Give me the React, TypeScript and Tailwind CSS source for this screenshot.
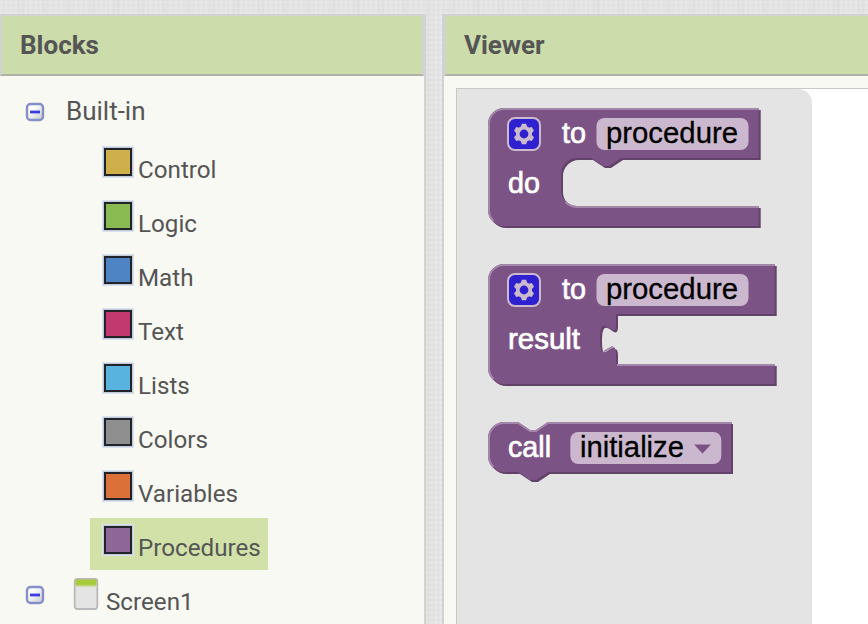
import type { ReactNode } from 'react';

const categories = [
  { name: 'Control', color: 'bg-[#cfae4c]' },
  { name: 'Logic', color: 'bg-[#8aba52]' },
  { name: 'Math', color: 'bg-[#4f84c4]' },
  { name: 'Text', color: 'bg-[#c2396f]' },
  { name: 'Lists', color: 'bg-[#58b4df]' },
  { name: 'Colors', color: 'bg-[#8f8f8f]' },
  { name: 'Variables', color: 'bg-[#db7139]' },
  { name: 'Procedures', color: 'bg-[#8f6698]', selected: true },
];

function Collapse() {
  return (
    <svg className="block h-5 w-5 shrink-0" viewBox="0 0 20 20">
      <defs>
        <linearGradient id="toggle" x1="0" y1="0" x2="1" y2="1">
          <stop offset="0.3" stopColor="#ffffff" />
          <stop offset="1" stopColor="#c8c8ce" />
        </linearGradient>
      </defs>
      <rect x="2" y="2" width="16" height="16" rx="3.5" fill="url(#toggle)" stroke="#8590c8" strokeWidth="2.4" />
      <path d="M5 10H15" stroke="#3c3ce0" strokeWidth="2.8" />
    </svg>
  );
}

function ScreenIcon() {
  return (
    <svg className="block h-8 w-[26px] shrink-0" viewBox="0 0 26 32">
      <defs>
        <linearGradient id="bar" x1="0" y1="0" x2="0" y2="1">
          <stop offset="0.6" stopColor="#a8cb3a" />
          <stop offset="1" stopColor="#e4e4e4" />
        </linearGradient>
      </defs>
      <rect x="1.7" y="1" width="22.6" height="30" rx="2.5" fill="#e4e4e4" stroke="#b9b9b9" strokeWidth="1.8" />
      <rect x="2.4" y="1.5" width="21.2" height="8" fill="url(#bar)" />
    </svg>
  );
}

function Panel({ title, className, headerClass, children }: { title: string; className: string; headerClass: string; children: ReactNode }) {
  return (
    <section className={`flex flex-col border-[#d2d2d2] bg-[#f8f9f3] ${className}`}>
      <h2 className={`flex h-[62px] shrink-0 items-center border-t-2 border-b-2 border-x-[#d2d2d2] border-t-[#d2d2d2] border-b-[#b0b0a6] bg-[#ccdcaa] text-[26px] font-bold text-[#555] ${headerClass}`}>
        {title}
      </h2>
      {children}
    </section>
  );
}

function Block({ outline, light, top, height, children }: { outline: string; light: string; top: string; height: number; children: ReactNode }) {
  return (
    <svg className={`absolute left-[488px] ${top}`} width="292" height={height} fontFamily="'Liberation Sans', Arial, sans-serif" fontSize="29.3">
      <path d={outline} fill="#63426a" transform="translate(2 2)" />
      <path d={outline} fill="#7c5385" />
      <path d={light} fill="none" stroke="#a387aa" strokeWidth="2" />
      {children}
    </svg>
  );
}

function Gear() {
  return (
    <g transform="translate(20 10)">
      <rect x="0" y="0" width="32" height="32" rx="7" fill="#2f20d0" stroke="#cbbace" strokeWidth="2" />
      <g fill="#cbbace" transform="translate(16 16)">
        <circle r="8" />
        <path d="M-2.2-10.3H2.2L3.4-6H-3.4Z" />
        <path d="M-2.2-10.3H2.2L3.4-6H-3.4Z" transform="rotate(60)" />
        <path d="M-2.2-10.3H2.2L3.4-6H-3.4Z" transform="rotate(120)" />
        <path d="M-2.2-10.3H2.2L3.4-6H-3.4Z" transform="rotate(180)" />
        <path d="M-2.2-10.3H2.2L3.4-6H-3.4Z" transform="rotate(240)" />
        <path d="M-2.2-10.3H2.2L3.4-6H-3.4Z" transform="rotate(300)" />
        <circle r="4.4" fill="#2f20d0" />
      </g>
    </g>
  );
}

function Label({ x, y, width, children }: { x: number; y: number; width: number; children: string }) {
  return (
    <text x={x} y={y} textLength={width} lengthAdjust="spacingAndGlyphs" fill="#fff" stroke="#fff" strokeWidth="0.7">
      {children}
    </text>
  );
}

function NameField() {
  return (
    <g>
      <rect x="108.5" y="10" width="152" height="32" rx="8" fill="#cbb8ce" />
      <text x="118" y="35" textLength="132" lengthAdjust="spacingAndGlyphs" stroke="#000" strokeWidth="0.3">procedure</text>
    </g>
  );
}

export default function App() {
  return (
    <div className="relative flex h-[624px] w-[868px] overflow-hidden bg-[#e8e8e8] bg-[repeating-linear-gradient(0deg,#0000_0_3px,#00000005_3px_5px),repeating-linear-gradient(90deg,#0000_0_2px,#00000004_2px_5px),repeating-linear-gradient(90deg,#0000_0_17px,#00000003_17px_24px)] pt-3.5 font-[Roboto,sans-serif] text-[#555]">
      <Panel title="Blocks" className="w-[426px] shrink-0 border-r-2" headerClass="border-x-2 pl-[18px]">
        <div className="flex h-16 shrink-0 items-center gap-[21px] pt-[7px] pl-[25px] text-[26px]">
          <Collapse />
          Built-in
        </div>
        <ul className="flex flex-col items-start gap-0.5 pl-[90px]">
          {categories.map((c) => (
            <li key={c.name} className={`flex h-[52px] gap-1 pr-[7px] pl-3 pt-1.5 ${c.selected ? 'bg-[#d2e1a8]' : ''}`}>
              <span className="h-8 w-8 shrink-0 border border-[#d9e0ef] bg-[#c3cad8] p-px">
                <span className={`block h-7 w-7 border-2 border-[#202328] ${c.color}`} />
              </span>
              <span className="pt-[6px] text-[24.2px] leading-9">{c.name}</span>
            </li>
          ))}
        </ul>
        <div className="flex h-[54px] shrink-0 items-start pt-2 pl-[25px] text-[24.2px]">
          <div className="pt-[7px]"><Collapse /></div>
          <div className="pl-7"><ScreenIcon /></div>
          <span className="pt-[6px] pl-[7px] leading-9">Screen1</span>
        </div>
      </Panel>

      <Panel title="Viewer" className="ml-4 min-w-0 flex-1 border-l-2" headerClass="border-l-2 pl-[18px]">
        <div className="mt-3 ml-3 flex flex-1 border-t border-l border-[#c8c8c8] bg-white">
          <div className="w-[355px] rounded-tr-[14px] bg-[#e4e4e4]" />
        </div>
      </Panel>

      <Block
        top="top-[108px]"
        height={122}
        outline="M0 16A16 16 0 0 1 16 0H270.7V50H133L121 58H115L103 50H89A16 16 0 0 0 73 66V82A16 16 0 0 0 89 98H270.7V118H16A16 16 0 0 1 0 102Z"
        light="M5.5 113A15 15 0 0 1 1 102V16A15 15 0 0 1 16 1H271M77.5 94A17 17 0 0 0 89 99H271"
      >
        <Gear />
        <Label x={74} y={35} width={24}>to</Label>
        <NameField />
        <Label x={20} y={85} width={32}>do</Label>
      </Block>

      <Block
        top="top-[264px]"
        height={124}
        outline="M0 16A16 16 0 0 1 16 0H286.7V50H128V60C128 80 112 44 112 75S128 70 128 90V100H286.7V120H16A16 16 0 0 1 0 104Z"
        light="M5.5 115A15 15 0 0 1 1 104V16A15 15 0 0 1 16 1H287M116 87.5L125 82.5M129 101H287"
      >
        <Gear />
        <Label x={74} y={35} width={24}>to</Label>
        <NameField />
        <Label x={20} y={85} width={72}>result</Label>
      </Block>

      <Block
        top="top-[422px]"
        height={62}
        outline="M0 16A16 16 0 0 1 16 0H30L42 8H48L60 0H243V50H60L48 58H42L30 50H16A16 16 0 0 1 0 34Z"
        light="M5.5 45A15 15 0 0 1 1 34V16A15 15 0 0 1 16 1H30L42 9H48L60 1H244"
      >
        <Label x={20} y={35} width={43}>call</Label>
        <rect x="82.3" y="10" width="151" height="32" rx="8" fill="#cbb8ce" />
        <text x="92" y="35" textLength="104" lengthAdjust="spacingAndGlyphs" stroke="#000" strokeWidth="0.3">initialize</text>
        <path d="M206 22.5H223L214.5 31.5Z" fill="#7c5385" />
      </Block>
    </div>
  );
}
